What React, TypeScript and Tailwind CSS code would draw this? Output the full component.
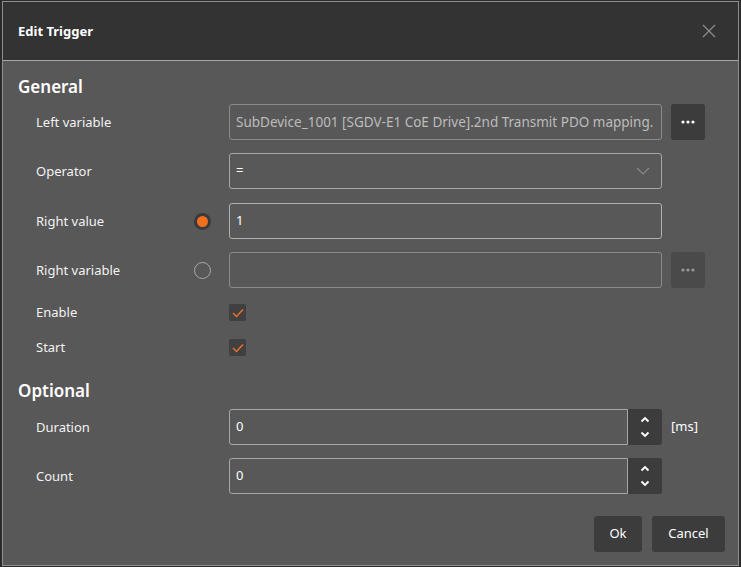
import React from "react";

const font = { fontFamily: '"Noto Sans", "Open Sans", sans-serif' };

function Dots({ dim }: { dim?: boolean }) {
  return (
    <svg width="14" height="4" viewBox="0 0 14 4">
      <circle cx="2" cy="2" r="1.6" fill={dim ? "#9a9a9a" : "#ffffff"} />
      <circle cx="7" cy="2" r="1.6" fill={dim ? "#9a9a9a" : "#ffffff"} />
      <circle cx="12" cy="2" r="1.6" fill={dim ? "#9a9a9a" : "#ffffff"} />
    </svg>
  );
}

function Check() {
  return (
    <div className="w-[17px] h-[17px] rounded-[2px] bg-[#404040] flex items-center justify-center">
      <svg width="12" height="10" viewBox="0 0 12 10">
        <path d="M1 5 L4.5 8.5 L11 1.5" stroke="#f07028" strokeWidth="1.4" fill="none" />
      </svg>
    </div>
  );
}

function Spinner() {
  return (
    <div className="w-[34px] h-[36px] bg-[#3c3c3c] rounded-r-[3px] flex flex-col items-center justify-between py-[7px]">
      <svg width="10" height="7" viewBox="0 0 10 7">
        <path d="M1.5 5.5 L5 2 L8.5 5.5" stroke="#ffffff" strokeWidth="1.8" fill="none" />
      </svg>
      <svg width="10" height="7" viewBox="0 0 10 7">
        <path d="M1.5 1.5 L5 5 L8.5 1.5" stroke="#ffffff" strokeWidth="1.8" fill="none" />
      </svg>
    </div>
  );
}

function Label({ children }: { children: React.ReactNode }) {
  return <div className="text-[13px] text-[#f2f2f2] w-[156px] pt-[1px]">{children}</div>;
}

export default function App() {
  return (
    <div className="w-[741px] h-[567px] bg-[#2b2b2b] pl-[2px] pt-[1px]" style={font}>
      <div className="w-[737px] h-[565px] border border-[#8f8f8f] bg-[#585858] flex flex-col">
        {/* header */}
        <div className="h-[59px] bg-[#333333] border-b border-[#a8a8a8] flex items-center justify-between pl-[15px] pr-[22px] shrink-0">
          <div className="text-[13px] font-bold text-white pt-[1px]">Edit Trigger</div>
          <svg width="14" height="14" viewBox="0 0 14 14">
            <path d="M1 1 L13 13 M13 1 L1 13" stroke="#8a8a8a" strokeWidth="1.3" fill="none" />
          </svg>
        </div>
        {/* body */}
        <div className="flex flex-col pl-[15px] pt-[13px]">
          <div className="h-[24px] flex items-center text-[17px] font-semibold text-white pt-[1px]">General</div>
          <div className="flex flex-col mt-[6px] pl-[18px]">
            <div className="flex items-center h-[36px]">
              <Label>Left variable</Label>
              <div className="w-[37px]" />
              <div className="w-[433px] h-[36px] border border-[#8a8a8a] rounded-[3px] flex items-center px-[6px] overflow-hidden whitespace-nowrap text-[13.5px] text-[#bcbcbc]">
                SubDevice_1001 [SGDV-E1 CoE Drive].2nd Transmit PDO mapping.
              </div>
              <div className="ml-[9px] w-[34px] h-[36px] rounded-[3px] bg-[#3c3c3c] flex items-center justify-center">
                <Dots />
              </div>
            </div>
            <div className="flex items-center h-[36px] mt-[13px]">
              <Label>Operator</Label>
              <div className="w-[37px]" />
              <div className="w-[433px] h-[36px] border border-[#a6a6a6] rounded-[3px] flex items-center justify-between pl-[6px] pr-[11px] text-[13px] text-white">
                <span>=</span>
                <svg width="14" height="8" viewBox="0 0 14 8">
                  <path d="M1 1 L7 7 L13 1" stroke="#8a8a8a" strokeWidth="1.2" fill="none" />
                </svg>
              </div>
            </div>
            <div className="flex items-center h-[36px] mt-[14px]">
              <Label>Right value</Label>
              <div className="w-[37px] flex items-center pl-[2px]">
                <div className="w-[17px] h-[17px] rounded-full bg-[#3a3a3a] flex items-center justify-center">
                  <div className="w-[11px] h-[11px] rounded-full bg-[#f07020]" />
                </div>
              </div>
              <div className="w-[433px] h-[36px] border border-[#b0b0b0] rounded-[3px] flex items-center px-[6px] text-[13px] text-white">
                1
              </div>
            </div>
            <div className="flex items-center h-[36px] mt-[13px]">
              <Label>Right variable</Label>
              <div className="w-[37px] flex items-center pl-[2px]">
                <div className="w-[17px] h-[17px] rounded-full border border-[#a8a8a8]" />
              </div>
              <div className="w-[433px] h-[36px] border border-[#8a8a8a] rounded-[3px]" />
              <div className="ml-[9px] w-[34px] h-[36px] rounded-[3px] bg-[#4a4a4a] flex items-center justify-center">
                <Dots dim />
              </div>
            </div>
          </div>
          <div className="flex flex-col mt-[7px] pl-[18px]">
            <div className="flex items-center h-[35px]">
              <Label>Enable</Label>
              <div className="w-[37px]" />
              <Check />
            </div>
            <div className="flex items-center h-[35px]">
              <Label>Start</Label>
              <div className="w-[37px]" />
              <Check />
            </div>
          </div>
          <div className="h-[24px] mt-[14px] flex items-center text-[17px] font-semibold text-white">Optional</div>
          <div className="flex flex-col gap-[13px] mt-[6px] pl-[18px]">
            <div className="flex items-center h-[36px]">
              <Label>Duration</Label>
              <div className="w-[37px]" />
              <div className="w-[399px] h-[36px] border border-[#a6a6a6] rounded-l-[3px] flex items-center px-[6px] text-[13px] text-white">
                0
              </div>
              <Spinner />
              <div className="ml-[9px] text-[13px] text-white">[ms]</div>
            </div>
            <div className="flex items-center h-[36px]">
              <Label>Count</Label>
              <div className="w-[37px]" />
              <div className="w-[399px] h-[36px] border border-[#a6a6a6] rounded-l-[3px] flex items-center px-[6px] text-[13px] text-white">
                0
              </div>
              <Spinner />
            </div>
          </div>
          <div className="flex justify-end gap-[10px] mt-[22px] pr-[13px]">
            <div className="w-[48px] h-[36px] rounded-[3px] bg-[#3c3c3c] flex items-center justify-center text-[13px] text-white">Ok</div>
            <div className="w-[73px] h-[36px] rounded-[3px] bg-[#3c3c3c] flex items-center justify-center text-[13px] text-white">Cancel</div>
          </div>
        </div>
      </div>
    </div>
  );
}
